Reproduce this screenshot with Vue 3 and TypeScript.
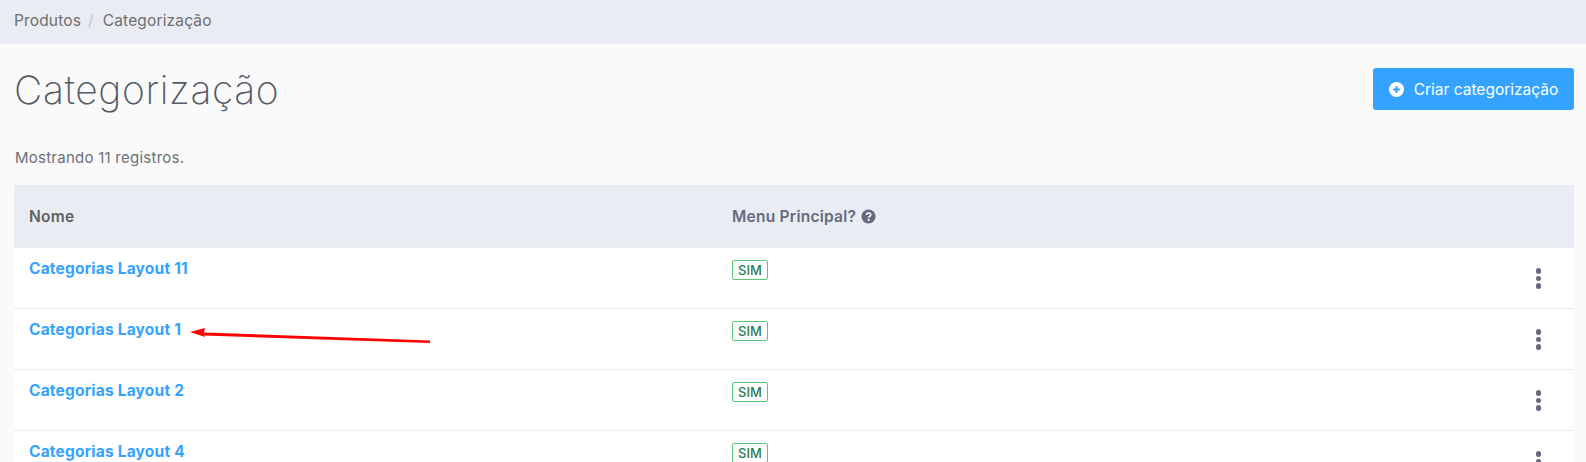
<script setup lang="ts">
const rows = [
  { name: 'Categorias Layout 11', menu: 'SIM' },
  { name: 'Categorias Layout 1', menu: 'SIM' },
  { name: 'Categorias Layout 2', menu: 'SIM' },
  { name: 'Categorias Layout 4', menu: 'SIM' },
];
</script>

<template>
  <div class="page">
    <nav class="breadcrumb">
      <a class="crumb">Produtos</a>
      <span class="sep">/</span>
      <span class="crumb">Categorização</span>
    </nav>

    <div class="content">
      <header class="title-row">
        <h1>Categorização</h1>
        <button class="btn-create">
          <svg class="plus" viewBox="0 0 16 16" width="15" height="15">
            <circle cx="8" cy="8" r="8" fill="#fff" />
            <path d="M8 4.4v7.2M4.4 8h7.2" stroke="#33a3ff" stroke-width="2.2" />
          </svg>
          Criar categorização
        </button>
      </header>

      <p class="count">Mostrando 11 registros.</p>

      <div class="table">
        <div class="row head">
          <div class="col-name">Nome</div>
          <div class="col-menu">
            Menu Principal?
            <svg class="help" viewBox="0 0 16 16" width="15" height="15">
              <circle cx="8" cy="8" r="7.5" fill="#666a80" />
              <path d="M5.7 6.2c.2-1.2 1.1-1.9 2.4-1.9 1.3 0 2.3.8 2.3 1.9 0 1.8-2.3 1.6-2.3 3.2" fill="none" stroke="#fff" stroke-width="1.7" />
              <circle cx="8.1" cy="11.6" r="1.1" fill="#fff" />
            </svg>
          </div>
          <div class="col-actions"></div>
        </div>

        <div v-for="row in rows" :key="row.name" class="row">
          <div class="col-name"><a class="link">{{ row.name }}</a></div>
          <div class="col-menu"><span class="badge">{{ row.menu }}</span></div>
          <div class="col-actions">
            <span class="dots"><i></i><i></i><i></i></span>
          </div>
        </div>
      </div>
    </div>

    <svg class="arrow" width="260" height="24" viewBox="0 0 260 24">
      <path d="M0 6 L15 2 L14 6.5 L240 14.5 L240 17 L14 9.5 L15 11 Z" fill="#f00" />
    </svg>
  </div>
</template>

<style>
html, body {
  margin: 0;
  background: #fafafa;
  overflow: hidden;
}
</style>

<style scoped>
.page {
  position: relative;
  width: 1586px;
  height: 462px;
  overflow: hidden;
  font-family: Inter, "Open Sans", sans-serif;
  color: #666a80;
  background: #fafafa;
}

.breadcrumb {
  height: 44px;
  box-sizing: border-box;
  background: #e9ecf3;
  padding: 0 0 4px 14px;
  display: flex;
  align-items: center;
  font-size: 15.5px;
  letter-spacing: 0.15px;
  color: #6f6f6f;
}
.sep {
  color: #bfc2c9;
  margin: 0 9px 0 7px;
}

.content {
  padding: 0 12px 0 14px;
}

.title-row {
  height: 88px;
  box-sizing: border-box;
  padding-top: 2px;
  display: flex;
  justify-content: space-between;
  align-items: center;
}
h1 {
  margin: 0;
  font-size: 39px;
  font-weight: 200;
  color: #555a66;
  letter-spacing: 0.6px;
}

.btn-create {
  width: 201px;
  height: 42px;
  border: 0;
  border-radius: 3px;
  background: #33a3ff;
  color: #fff;
  font: inherit;
  font-size: 15.5px;
  display: flex;
  align-items: center;
  justify-content: center;
  gap: 10px;
}

.count {
  margin: 0;
  height: 53px;
  box-sizing: border-box;
  padding: 16px 0 0 1px;
  font-size: 15px;
  letter-spacing: 0.25px;
  color: #6f6f78;
}

.table {
  background: #fff;
}
.row {
  display: grid;
  grid-template-columns: 718px 1fr 71px;
  height: 61px;
  box-sizing: border-box;
  border-bottom: 1px solid #ebebeb;
}
.row.head {
  height: 63px;
  background: #e9ecf3;
  align-items: center;
  font-size: 15.5px;
  letter-spacing: 0.25px;
  font-weight: 600;
  color: #5f5f5f;
}
.col-name {
  padding-left: 15px;
}
.col-menu {
  display: flex;
  align-items: center;
  gap: 5px;
  align-self: center;
  color: #666a80;
}
.row:not(.head) .col-name {
  padding-top: 10px;
}
.row:not(.head) .col-menu {
  align-self: start;
  padding-top: 12px;
}
.link {
  color: #33a3ff;
  font-size: 15.5px;
  letter-spacing: 0.2px;
  font-weight: 700;
}
.badge {
  display: inline-block;
  border: 1px solid #5cc872;
  border-radius: 2px;
  padding: 0 5px;
  height: 18px;
  line-height: 18px;
  font-size: 13px;
  font-weight: 500;
  color: #2e7d4f;
}
.col-actions {
  display: flex;
  justify-content: center;
  padding-top: 20px;
}
.dots {
  display: flex;
  flex-direction: column;
  gap: 2px;
}
.dots i {
  width: 5.5px;
  height: 5.5px;
  border-radius: 50%;
  background: #666a80;
}

.arrow {
  position: absolute;
  left: 190px;
  top: 326px;
}
</style>
